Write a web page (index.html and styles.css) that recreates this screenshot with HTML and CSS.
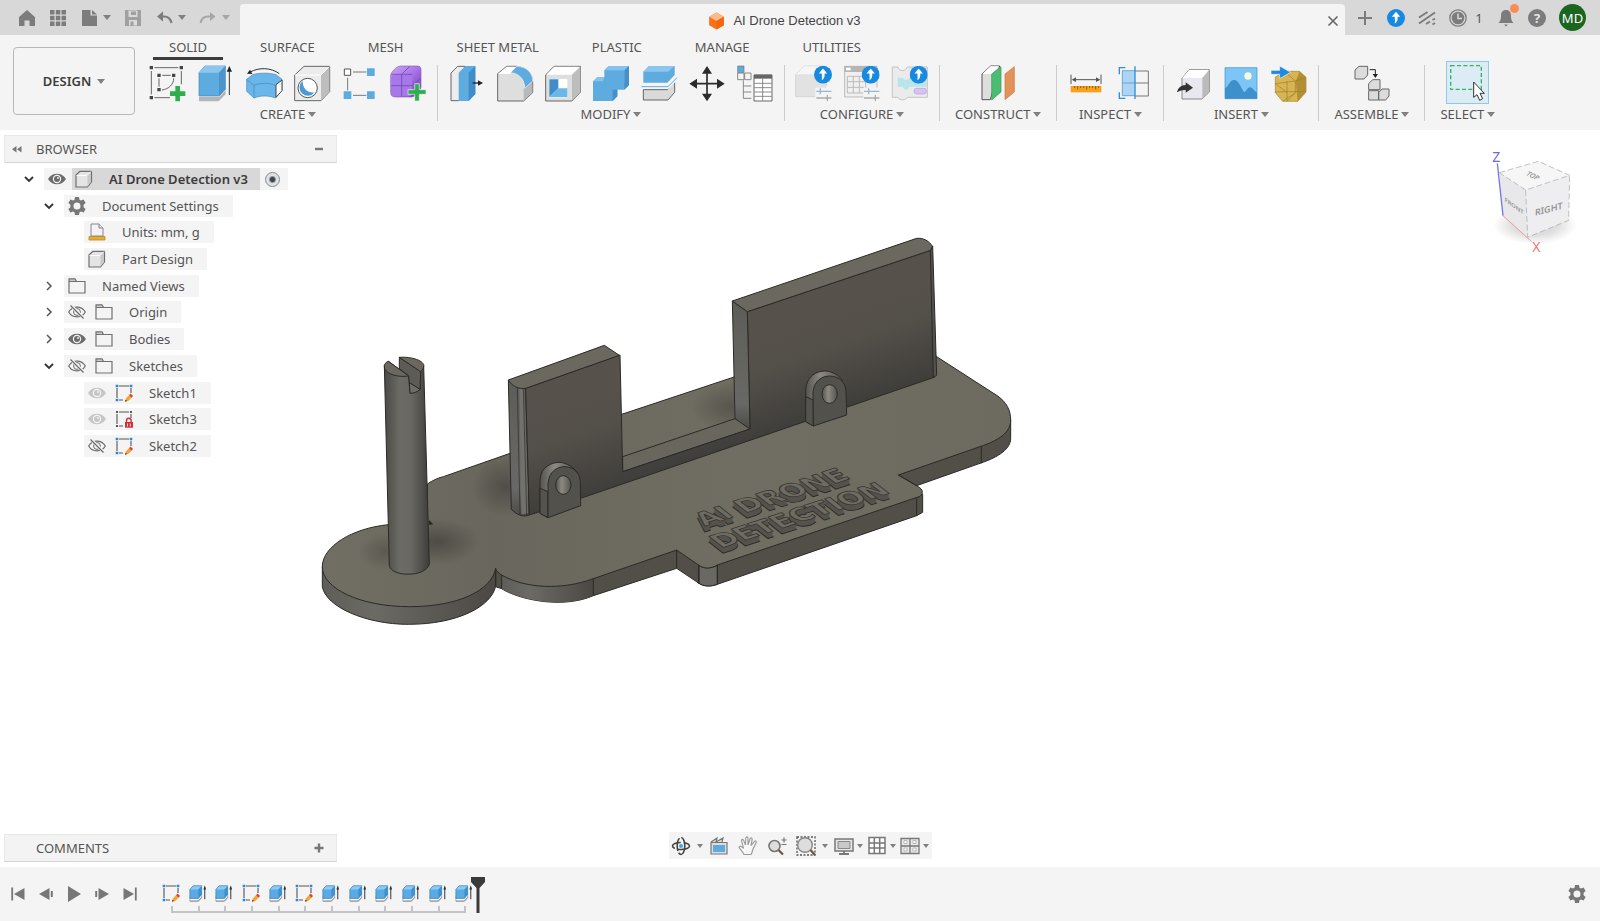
FILE: index.html
```
<!DOCTYPE html>
<html lang="en">
<head>
    <meta charset="UTF-8">
    <title>AI Drone Detection v3</title>
    <link rel="stylesheet" href="styles.css">
</head>
<body>

    <!-- Shared icons -->
    <svg class="sprite" aria-hidden="true">
        <defs>
            <linearGradient id="post" x1="0" x2="1" y1="0" y2="0">
                <stop offset="0" stop-color="#4b4945"/><stop offset=".35" stop-color="#6d6b65"/>
                <stop offset=".6" stop-color="#696761"/><stop offset="1" stop-color="#3f3d3a"/>
            </linearGradient>
            <linearGradient id="disc-side" x1="0" x2="1" y1="0" y2="0">
                <stop offset="0" stop-color="#5e5d58"/><stop offset=".3" stop-color="#6c6a65"/>
                <stop offset="1" stop-color="#4b4843"/>
            </linearGradient>
            <linearGradient id="wall" gradientUnits="userSpaceOnUse" x1="1052" y1="435" x2="1150" y2="719">
                <stop offset="0" stop-color="#56514b"/><stop offset=".4" stop-color="#534f49"/>
                <stop offset="1" stop-color="#403e3b"/>
            </linearGradient>
            <linearGradient id="wall-side" x1="0" x2="0" y1="0" y2="1">
                <stop offset="0" stop-color="#5d5c58"/><stop offset=".8" stop-color="#686966"/>
                <stop offset="1" stop-color="#4b4a47"/>
            </linearGradient>
            <linearGradient id="plate" x1="0" x2="1" y1="0" y2="0">
                <stop offset="0" stop-color="#716e64"/><stop offset=".25" stop-color="#69665d"/>
                <stop offset=".6" stop-color="#706d62"/><stop offset="1" stop-color="#6d6a60"/>
            </linearGradient>
            <linearGradient id="lug" x1="0" x2="1" y1="0" y2="0">
                <stop offset="0" stop-color="#55534e"/><stop offset=".4" stop-color="#8d8982"/>
                <stop offset="1" stop-color="#55534e"/>
            </linearGradient>
            <radialGradient id="shade">
                <stop offset="0" stop-color="#33312e" stop-opacity=".7"/>
                <stop offset="1" stop-color="#33312e" stop-opacity="0"/>
            </radialGradient>
            <radialGradient id="cube-shadow">
                <stop offset=".5" stop-color="#aaa" stop-opacity=".4"/>
                <stop offset="1" stop-color="#aaa" stop-opacity="0"/>
            </radialGradient>
            <linearGradient id="purple" x1="0" x2="1" y1="0" y2="1">
                <stop offset="0" stop-color="#c9a5f0"/><stop offset=".5" stop-color="#a673e6"/>
                <stop offset="1" stop-color="#6d35b0"/>
            </linearGradient>
        </defs>

        <symbol id="eye" viewBox="0 0 18 18">
            <path d="M0 9C4 2 14 2 18 9 14 16 4 16 0 9z" fill="currentColor"/>
            <circle cx="9" cy="9" r="4.2" fill="#f4f4f4"/><circle cx="9" cy="9" r="3" fill="currentColor"/>
            <circle cx="10" cy="8" r=".9" fill="#f4f4f4"/>
        </symbol>
        <symbol id="eye-off" viewBox="0 0 18 18">
            <path d="M.7 9C4.500 2.500 13.500 2.500 17.300 9 13.500 15.500 4.500 15.500.7 9z" fill="none" stroke="currentColor" stroke-width="1.2"/>
            <circle cx="9" cy="9" r="3.400" fill="none" stroke="currentColor"/>
            <path d="M3 2.500l13 13" stroke="#f4f4f4" stroke-width="3"/>
            <path d="M2.500 2.500l13 13" stroke="currentColor" stroke-width="1.300"/>
        </symbol>
        <symbol id="folder" viewBox="0 0 18 18">
            <path d="M1 2h6.500l1.500 2.500H1z" fill="#ccc"/>
            <path d="M1 16V1.800h6l1.500 2.700H17V16zM1 4.500h8" fill="none" stroke="#707070" stroke-width="1.200"/>
        </symbol>
        <symbol id="part" viewBox="0 0 18 18">
            <path d="M1 5l4-3.700h11.500V12l-4 5H1z" fill="#e4e4e4" stroke="#6f6f6f" stroke-width="1.200" stroke-linejoin="round"/>
            <path d="M1.500 5.500H12l4-4" fill="none" stroke="#fff"/><path d="M12.500 5.500l3.500-3.500V12l-3.500 4.500z" fill="#c9c9c9"/>
        </symbol>
        <symbol id="sketch" viewBox="0 0 18 18">
            <path d="M2 4v10M4 2h10M16 4v5M4 16h4" stroke="#555" stroke-width="1.100"/>
            <path d="M.7.7h2.600v2.600H.7zM14.700.7h2.600v2.600h-2.600zM.7 14.700h2.600v2.600H.7z" fill="#2d86d9"/>
            <path d="M10 17.700l1-3.500 3-3 2.500 2.500-3 3z" fill="#f4a62a"/>
            <path d="M14 11.200l1.600-1.600 2.400 2.400-1.500 1.700z" fill="#d5423a"/><path d="M10 17.700l.6-2 1.500 1.400z" fill="#333"/>
        </symbol>
        <symbol id="sketch-locked" viewBox="0 0 18 18">
            <path d="M2 4v10M4 2h10M16 4v4M4 16h4" stroke="#555" stroke-width="1.100"/>
            <path d="M1 1h2v2H1zM15 1h2v2h-2zM1 15h2v2H1z" fill="#555"/>
            <path d="M11.500 12v-1.500a2.300 2.300 0 014.600 0V12" fill="none" stroke="#cf3038" stroke-width="1.400"/>
            <path d="M10 12h8v5.700h-8z" fill="#cf3038"/><path d="M12.500 13.500v3M15.300 13.500v3" stroke="#fff" stroke-width=".8"/>
        </symbol>
        <symbol id="gear" viewBox="0 0 18 18">
            <path fill="#777" fill-rule="evenodd" d="M7 0h4l.5 2.700 1.500.8 2.600-1 2 3.400-2 1.900v2.400l2 1.900-2 3.400-2.600-1-1.500.8L11 18H7l-.5-2.700-1.500-.8-2.600 1-2-3.400 2-1.900V7.800l-2-1.900 2-3.400 2.600 1 1.500-.8zM9 5.500a3.500 3.500 0 100 7 3.500 3.500 0 000-7z"/>
        </symbol>
        <symbol id="extrude" viewBox="0 0 20 20">
            <path d="M1 14l3 0v0h7l3-3v4l-3.500 4H1z" fill="#fff" stroke="#aaa"/>
            <path d="M1 19H10.500l4-4.500" fill="none" stroke="#888"/>
            <path d="M1 6l3.500-4H14v9.500L10.500 16H1z" fill="#5aaae4" stroke="#3380b8" stroke-width=".8"/>
            <path d="M1.500 6l3-3.500H14L10.500 6z" fill="#8cc9f3"/><path d="M10.500 6L14 2.500v9L10.500 15.500z" fill="#3c8fd0"/>
            <path d="M17.500 17V4" stroke="#444" stroke-width="1.200"/><path d="M16 6l1.500-4.500L19 6z" fill="#333"/>
        </symbol>
        <symbol id="upgrade" viewBox="0 0 18 18">
            <circle cx="9" cy="9" r="9" fill="#1689e0"/>
            <path d="M9 2.800l4.200 5h-2.600c.2 3-.1 5.300-3 7 .6-2 .2-4.500.1-7H4.800z" fill="#fff"/>
        </symbol>
        <symbol id="chev-down" viewBox="0 0 10 10"><path d="M1 3l4 4 4-4" fill="none" stroke="#333" stroke-width="1.800"/></symbol>
        <symbol id="chev-right" viewBox="0 0 10 10"><path d="M3 1l4 4-4 4" fill="none" stroke="#555" stroke-width="1.500"/></symbol>
    </svg>

    <!-- Application bar -->
    <header class="appbar">
        <div class="appbar-left">
            <button class="icon-btn" aria-label="Home"><svg viewBox="0 0 18 18"><path d="M9 1l8.500 7.500H17V17h-5.500v-5.500h-5V17H1V8.500H.5z" fill="#7c7c7c"/></svg></button>
            <button class="icon-btn" aria-label="Data panel"><svg viewBox="0 0 18 18"><path d="M1 1h4.500v4.500H1zM6.800 1h4.500v4.500H6.800zM12.500 1H17v4.500h-4.500zM1 6.800h4.500v4.500H1zM6.800 6.800h4.500v4.500H6.800zM12.500 6.800H17v4.500h-4.500zM1 12.500h4.500V17H1zM6.800 12.500h4.500V17H6.800zM12.500 12.500H17V17h-4.500z" fill="#7c7c7c"/></svg></button>
            <button class="icon-btn" aria-label="File"><svg viewBox="0 0 18 18"><path d="M2 1h8.500v5.500H17V17H2z" fill="#7c7c7c"/><path d="M12 1l5 4.500h-5z" fill="#7c7c7c"/></svg><i class="caret"></i></button>
            <button class="icon-btn dim" aria-label="Save"><svg viewBox="0 0 18 18"><path d="M1 1h16v16H1z" fill="#a0a0a0"/><path d="M4.500 1.500h9V8h-9zM5 11h8v5.500H5z" fill="#dadada"/><path d="M7 2.500h5v3.500H7zM6.500 12.500h3V17h-3z" fill="#a0a0a0"/></svg></button>
            <button class="icon-btn" aria-label="Undo"><svg viewBox="0 0 18 18"><path d="M5.500 7.500H9c4 0 6.500 2 7.500 6.500" fill="none" stroke="#7c7c7c" stroke-width="2.200"/><path d="M8 2.500v10L2 7.500z" fill="#7c7c7c"/></svg><i class="caret"></i></button>
            <button class="icon-btn dim" aria-label="Redo"><svg viewBox="0 0 18 18"><path d="M12 7.500H9c-4 0-6.500 2-7.500 6.500" fill="none" stroke="#a6a6a6" stroke-width="1.800"/><path d="M11 3v9l5.500-4.500z" fill="#a6a6a6"/></svg><i class="caret"></i></button>
        </div>
        <div class="doc-tab">
            <svg class="doc-icon" viewBox="0 0 18 18"><path d="M9 0l7.800 4.500v9L9 18l-7.800-4.500v-9z" fill="#f97316"/><path d="M9 0l7.800 4.500L9 9 1.200 4.500z" fill="#fbb98c"/><path d="M9 9l7.800-4.500v9L9 18z" fill="#f4680c"/></svg>
            <span>AI Drone Detection v3</span>
            <button class="doc-close" aria-label="Close"><svg viewBox="0 0 12 12"><path d="M1.500 1.500l9 9M10.500 1.500l-9 9" stroke="#666" stroke-width="1.600"/></svg></button>
        </div>
        <div class="appbar-right">
            <button class="icon-btn" aria-label="New design"><svg viewBox="0 0 18 18"><path d="M9 2v14M2 9h14" stroke="#7c7c7c" stroke-width="2"/></svg></button>
            <button class="icon-btn" aria-label="Updates"><svg><use href="#upgrade"/></svg></button>
            <button class="icon-btn" aria-label="Extensions"><svg viewBox="0 0 18 18"><path d="M1 8.500L9.500 3M1 14.500L17 3.500M8 15l4-2.500M14.500 11l2.500-1.500M14.500 15.500l2.500-1.500" stroke="#7c7c7c" stroke-width="2"/></svg></button>
            <button class="icon-btn" aria-label="Job status"><svg viewBox="0 0 18 18"><circle cx="9" cy="9" r="8.200" fill="none" stroke="#7c7c7c" stroke-width="1.300"/><circle cx="9" cy="9" r="6.300" fill="#7c7c7c"/><path d="M9 4.500V9.500h4" fill="none" stroke="#dadada" stroke-width="1.500"/></svg><span class="job-count">1</span></button>
            <button class="icon-btn bell" aria-label="Notifications"><svg viewBox="0 0 18 18"><path d="M9 1c3.500 0 5 2.500 5 6 0 4 1 5 2.500 7h-15C3 12 4 11 4 7c0-3.500 1.500-6 5-6zM7 15.500h4L9 17.500z" fill="#7c7c7c"/></svg><i class="dot"></i></button>
            <button class="icon-btn help" aria-label="Help">?</button>
            <button class="avatar">MD</button>
        </div>
    </header>

    <!-- Ribbon -->
    <div class="ribbon">
        <button class="workspace">DESIGN<i class="caret"></i></button>
        <div class="ribbon-main">
            <nav class="tabs">
                <button class="tab active">SOLID</button>
                <button class="tab">SURFACE</button>
                <button class="tab">MESH</button>
                <button class="tab">SHEET METAL</button>
                <button class="tab">PLASTIC</button>
                <button class="tab">MANAGE</button>
                <button class="tab">UTILITIES</button>
            </nav>
            <div class="groups">
                <section class="group">
                    <div class="tools">
                        <button class="tool" aria-label="Create sketch"><svg viewBox="451 188 120 120">
                            <path d="M470 202h72M461 212v70M551 212v40M470 292h47M494 225h25M484 234v25M528 234c0 18-14 32-35 35" fill="none" stroke="#666" stroke-width="3"/>
                            <path d="M456 197h10v10h-10zM546 197h10v10h-10zM456 287h10v10h-10zM479 220h10v10h-10zM523 220h10v10h-10zM479 263h10v10h-10z" fill="#444"/>
                            <path d="M533 257h14v16h16v14h-16v16h-14v-16h-16v-14h16z" fill="#2fae50"/></svg></button>
                        <button class="tool" aria-label="Extrude"><svg viewBox="595 188 120 120">
                            <path d="M604 290h60l20-20v12l-21 21h-59z" fill="#b5b5b5"/>
                            <path d="M604 217l18-20h61v70l-19 20h-60z" fill="#5eabe0" stroke="#3f86bd" stroke-width="2"/><path d="M604 217l18-20h61l-19 20z" fill="#8bc6ef"/><path d="M664 217l19-20v70l-19 20z" fill="#4b95cb"/>
                            <path d="M695 284v-75" stroke="#333" stroke-width="3"/><path d="M687 214l8-17 8 17z" fill="#222"/></svg></button>
                        <button class="tool" aria-label="Revolve"><svg viewBox="736 188 120 120">
                            <path d="M755 215c25-14 62-14 87 5" fill="none" stroke="#333" stroke-width="3"/><path d="M745 220l9-12 7 13z" fill="#222"/>
                            <path d="M744 237l18-14c22-6 48-6 70 0l18 14v34l-20 22c-20-8-45-8-64 0l-22-20z" fill="#6ab6ea" stroke="#3f86bd" stroke-width="2"/>
                            <path d="M744 237l22 18v38M766 255c20-8 45-8 64 0" fill="none" stroke="#3f86bd" stroke-width="2"/><path d="M832 253l18-14v32l-18 20z" fill="#fff" stroke="#444" stroke-width="3"/></svg></button>
                        <button class="tool" aria-label="Hole"><svg viewBox="880 188 120 120">
                            <path d="M888 224l28-26h77v76l-26 27h-79z" fill="#ececec" stroke="#666" stroke-width="3"/><path d="M967 224l25-25v75l-25 26z" fill="#bdbdbd"/><path d="M889 224h78l25-25" fill="none" stroke="#fff" stroke-width="3"/>
                            <circle cx="927" cy="263" r="29" fill="#fff" stroke="#555" stroke-width="3"/><path d="M912 242a25 25 0 1036 34c-18 4-37-10-36-34z" fill="#4a9bd8"/></svg></button>
                        <button class="tool" aria-label="Pattern"><svg viewBox="1019 188 120 120">
                            <path d="M1058 215h40M1042 232v38M1058 285h40" stroke="#777" stroke-width="3"/><path d="M1032 206h19v19h-19z" fill="#fff" stroke="#555" stroke-width="3"/>
                            <path d="M1100 204h23v23h-23zM1030 273h23v23h-23zM1100 273h23v23h-23z" fill="#5eabe0"/></svg></button>
                        <button class="tool" aria-label="Create form"><svg viewBox="1166 188 120 120">
                            <path d="M1174 226c0-10 18-29 30-29h48c10 0 13 4 13 12v50c0 10-18 31-28 31h-48c-10 0-15-4-15-14z" fill="url(#purple)" stroke="#8b62bd" stroke-width="2"/>
                            <rect x="1176" y="224" width="62" height="64" rx="10" fill="#a678ea"/>
                            <path d="M1176 256h62M1207 224v64M1238 256l26-22M1207 222l24-24M1176 222h62" fill="none" stroke="#7745b8" stroke-width="2.500"/>
                            <path d="M1246 250h14v18h20v14h-20v20h-14v-20h-20v-14h20z" fill="#2fae50" stroke="#f4f4f4" stroke-width="2"/></svg></button>
                    </div>
                    <button class="group-label">CREATE<i class="caret"></i></button>
                </section>
                <span class="divider"></span>
                <section class="group">
                    <div class="tools">
                        <button class="tool" aria-label="Press pull"><svg viewBox="55 188 120 120">
                            <path d="M67 218l20-20h22v100l-20 3H67z" fill="#ececec" stroke="#666" stroke-width="3"/><path d="M90 217l20-20h30v84l-20 21H90z" fill="#5eabe0"/><path d="M120 217l20-20v84l-20 21z" fill="#3f8cc9"/>
                            <path d="M132 248h20" stroke="#222" stroke-width="4"/><path d="M148 240l15 8-15 8z" fill="#222"/></svg></button>
                        <button class="tool" aria-label="Fillet"><svg viewBox="200 188 120 120">
                            <path d="M208 220l27-22h30c28 3 48 22 48 46v33l-27 25h-78z" fill="#dedede" stroke="#666" stroke-width="3"/><path d="M209 221l26-22h28l-18 22z" fill="#fff"/><path d="M286 264l26-22v35l-26 24z" fill="#b9b9b9"/>
                            <path d="M247 217l18-19c30 0 48 20 48 44l-24 22c0-28-16-44-42-47z" fill="#5eabe0" stroke="#f4f4f4" stroke-width="2"/></svg></button>
                        <button class="tool" aria-label="Shell"><svg viewBox="344 188 120 120">
                            <path d="M352 224l25-26h79v78l-25 26h-79z" fill="#dedede" stroke="#666" stroke-width="3"/><path d="M354 223l24-24h76l-24 24z" fill="#fff"/><path d="M431 224l25-25v77l-25 25z" fill="#bdbdbd"/>
                            <path d="M362 236h55v55h-55z" fill="#fff"/><path d="M363 237h27v27l-27 26z" fill="#3f8cc9"/><path d="M390 264h27v26h-54z" fill="#6cb7ea"/></svg></button>
                        <button class="tool" aria-label="Combine"><svg viewBox="487 188 120 120">
                            <path d="M493 243l13-12h21v-21l13-13h61v57l-14 14h-21v20l-14 14h-59z" fill="#5eabe0"/><path d="M493 243l13-12h21l-4 12zM527 210l13-13h61l-13 13z" fill="#85c3ee"/><path d="M588 210l13-13v57l-14 14zM552 268h14v20l-14 14z" fill="#4590c8"/></svg></button>
                        <button class="tool" aria-label="Split body"><svg viewBox="630 188 120 120">
                            <path d="M643 214l17-17h77v27l-22 23h-72z" fill="#5eabe0"/><path d="M643 214l17-17h77l-20 17z" fill="#8bc6ef"/>
                            <path d="M643 268h72l22-24v32l-20 23h-74z" fill="#d9d9d9" stroke="#666" stroke-width="3"/><path d="M637 259h80l27-27" fill="none" stroke="#f4f4f4" stroke-width="12"/><path d="M637 259h80l27-27" fill="none" stroke="#5eabe0" stroke-width="3"/></svg></button>
                        <button class="tool" aria-label="Move"><svg viewBox="773 188 120 120">
                            <path d="M833 210v80M795 250h78" stroke="#2b2b2b" stroke-width="5"/><path d="M833 197l15 23h-30zM833 303l15-23h-30zM780 250l23-15v30zM886 250l-23-15v30z" fill="#2b2b2b"/></svg></button>
                        <button class="tool" aria-label="Parameters"><svg viewBox="917 188 120 120">
                            <path d="M925 197h19v20h-19z" fill="#5eabe0" stroke="#777" stroke-width="2"/><path d="M925 218h19v20h-19zM946 218h19v20h-19zM942 240v54h24M942 257h24M942 275h24" fill="none" stroke="#888" stroke-width="3"/>
                            <path d="M974 224h54v78h-54z" fill="#fff" stroke="#666" stroke-width="3"/><path d="M974 223h54v12h-54z" fill="#666"/><path d="M975 249h52M975 262h52M975 275h52M975 288h52M1000 235v66" stroke="#777" stroke-width="2.500"/></svg></button>
                    </div>
                    <button class="group-label">MODIFY<i class="caret"></i></button>
                </section>
                <span class="divider"></span>
                <section class="group">
                    <div class="tools">
                        <button class="tool" aria-label="Configure part"><svg viewBox="48 188 120 120">
                            <path d="M53 222l26-25h66v60l-24 32H53z" fill="#e2e2e2" stroke="#ccc" stroke-width="2"/><path d="M54 222l25-24h50l-18 24z" fill="#f6f6f6"/>
                            <path d="M112 262h52v40h-52z" fill="#f4f4f4"/><path d="M115 273h45M127 264v18" stroke="#8ebad3" stroke-width="4"/><path d="M115 293h45M148 284v18" stroke="#aaa" stroke-width="4"/><use href="#upgrade" x="108" y="196" width="54" height="54"/></svg></button>
                        <button class="tool" aria-label="Configuration table"><svg viewBox="192 188 120 120">
                            <path d="M200 198h97v92h-97z" fill="#f0f0f0" stroke="#bbb" stroke-width="3"/><path d="M199 197h98v18h-98z" fill="#b5b5b5"/><path d="M204 202h14v8h-14z" fill="#fff"/><path d="M208 228h55v50h-55zM208 244h55M208 261h50M226 228v50M244 228v50" fill="none" stroke="#bbb" stroke-width="3"/>
                            <path d="M256 262h52v40h-52z" fill="#f4f4f4"/><path d="M258 273h46M272 264v18" stroke="#8ebad3" stroke-width="4"/><path d="M258 293h46M292 284v18" stroke="#aaa" stroke-width="4"/><use href="#upgrade" x="251" y="196" width="54" height="54"/></svg></button>
                        <button class="tool" aria-label="Configuration rules"><svg viewBox="336 188 120 120">
                            <path d="M343 200h17c2 14 24 14 28 0h60v91h-60c-4 10-24 10-28 0h-17z" fill="#ebebeb" stroke="#c4c4c4" stroke-width="3"/><path d="M359 232h15c4 8 16 8 20 0h52v27h-52c-4 12-16 12-20 0h-15z" fill="#b8e5e9"/>
                            <rect x="408" y="264" width="37" height="17" rx="7" fill="#d5c3f2" stroke="#b89be0" stroke-width="2"/><use href="#upgrade" x="395" y="196" width="54" height="54"/></svg></button>
                    </div>
                    <button class="group-label">CONFIGURE<i class="caret"></i></button>
                </section>
                <span class="divider"></span>
                <section class="group">
                    <div class="tools">
                        <button class="tool" aria-label="Construction plane"><svg viewBox="598 188 120 120">
                            <path d="M610 221l26-24h27l-28 101h-25z" fill="#dedede" stroke="#555" stroke-width="3"/><path d="M611 221l25-23h25l-22 23z" fill="#fff"/><path d="M639 221l28-22v76l-28 24z" fill="#4bbd73" stroke="#359a59" stroke-width="2"/><path d="M679 221l28-22v76l-28 23z" fill="#e3925a" stroke="#c9773e" stroke-width="2"/></svg></button>
                    </div>
                    <button class="group-label">CONSTRUCT<i class="caret"></i></button>
                </section>
                <span class="divider"></span>
                <section class="group">
                    <div class="tools">
                        <button class="tool" aria-label="Measure"><svg viewBox="862 188 120 120">
                            <path d="M877 223v28M967 223v28M884 238h76" stroke="#555" stroke-width="3"/><path d="M879 238l13-7v14zM965 238l-13-7v14z" fill="#555"/><path d="M876 257h92v19h-92z" fill="#f7a21b"/><path d="M888 257v6M897 257v10M906 257v6M915 257v6M924 257v10M933 257v6M942 257v6M951 257v10M960 257v6" stroke="#7b4f0b" stroke-width="2.500"/></svg></button>
                        <button class="tool" aria-label="Section analysis"><svg viewBox="1004 188 120 120">
                            <path d="M1067 212h40v75h-40M1067 248h40" fill="none" stroke="#777" stroke-width="3"/><path d="M1029 211h38v75h-38z" fill="#add5f3"/><path d="M1029 211h38M1029 248h38M1029 286h38M1029 211v75" stroke="#5b9ccc" stroke-width="2.500"/><path d="M1067 198v98M1020 222v-20h18M1020 276v18h18" fill="none" stroke="#2b91dc" stroke-width="4"/></svg></button>
                    </div>
                    <button class="group-label">INSPECT<i class="caret"></i></button>
                </section>
                <span class="divider"></span>
                <section class="group">
                    <div class="tools">
                        <button class="tool" aria-label="Insert derive"><svg viewBox="46 188 120 120">
                            <path d="M73 234l21-26h61v67l-22 21H73z" fill="#e8e8ee" stroke="#777" stroke-width="2.500"/><path d="M74 233l20-24h60l-20 24z" fill="#fff"/><path d="M134 233l20-24v65l-20 21z" fill="#bbb"/>
                            <path d="M84 246l22 16-22 15v-8c-12-1-18 3-26 7 3-13 12-22 26-22z" fill="#333"/></svg></button>
                        <button class="tool" aria-label="Insert canvas"><svg viewBox="187 188 120 120">
                            <path d="M199 202h96v93h-96z" fill="#7cc5f7" stroke="#3e8fcb" stroke-width="2"/><circle cx="268" cy="227" r="11" fill="#fbf9dc"/><path d="M199 264c10-4 14-25 27-25 15 0 20 24 31 37 8-6 10-15 17-15 9 0 12 12 21 16v18h-96z" fill="#3e90cb"/></svg></button>
                        <button class="tool" aria-label="Insert mesh"><svg viewBox="333 188 120 120">
                            <path d="M352 230l30-17h42l20 18v44l-25 28h-45l-22-26z" fill="#d9b552" stroke="#a0832f" stroke-width="2"/><path d="M425 213l19 18v44l-25 28-6-60z" fill="#b38f34"/><path d="M352 250l60-8 32-10M352 275l92-2M382 215l30 27v36l-25 24M352 250l35 26M374 302l38-24M387 243v60" fill="none" stroke="#9c7f2d" stroke-width="2"/>
                            <path d="M339 210h26v-13l33 19-33 19v-13h-26z" fill="#1e8be0" stroke="#f4f4f4" stroke-width="2"/></svg></button>
                    </div>
                    <button class="group-label">INSERT<i class="caret"></i></button>
                </section>
                <span class="divider"></span>
                <section class="group">
                    <div class="tools">
                        <button class="tool" aria-label="New component"><svg viewBox="583 188 120 120">
                            <g fill="#dcdcdc" stroke="#666" stroke-width="3" stroke-linejoin="round"><path d="M592 209l12-11h26v26l-11 12h-27zM633 250l12-12h22v30h-34zM633 271h30v28h-30zM663 277l10-11h21v21l-10 12h-21z"/></g>
                            <path d="M636 208h17v16" fill="none" stroke="#222" stroke-width="3"/><path d="M645 221h16l-8 12z" fill="#222"/></svg></button>
                    </div>
                    <button class="group-label">ASSEMBLE<i class="caret"></i></button>
                </section>
                <span class="divider"></span>
                <section class="group">
                    <div class="tools">
                        <button class="tool selected" aria-label="Select"><svg viewBox="882 190 120 120">
                            <path d="M890 198h92v71h-92z" fill="none" stroke="#35b163" stroke-width="4" stroke-dasharray="12 7"/><path d="M959 247v46l10-8 8 17 9-5-8-16h13z" fill="#fff" stroke="#333" stroke-width="3"/></svg></button>
                    </div>
                    <button class="group-label">SELECT<i class="caret"></i></button>
                </section>
            </div>
        </div>
    </div>

    <!-- Modeling viewport -->
    <main class="viewport">
        <svg class="model" viewBox="0 0 2160 1260" stroke-linejoin="round">
            <!-- base thickness -->
            <g stroke="#2b2a27" stroke-width="3">
                <path d="M37 1040v60c10 60 130 113 258 113 150 0 250-55 262-115v-53z" fill="url(#disc-side)"/>
                <path d="M557 1045v55l18 6c50 32 180 62 275 21l250-82 67 45c15 10 35 10 55 3l598-206 18-10v-53l-18-27 190-67c60-20 92-45 92-75v-55z" fill="#524f49"/>
                <path d="M575 1066c90 46 200 42 275 10v51c-95 41-225 11-275-21z" fill="url(#disc-side)" stroke="none"/>
                <path d="M1167 1036c15 10 35 10 55 0v57c-20 7-40 7-55-3z" fill="#6a6863"/>
            </g>
            <!-- base top -->
            <path d="M37 1040C37 980 125 925 235 914L352 908V792c15-10 30-18 48-22l535-187 340-113 602-62 183 118c30 20 42 45 42 74 0 36-32 60-92 80l-245 85 60 35c14 9 16 18 5 29l-608 206c-20 12-40 12-55 1l-67-46-250 86c-95 35-205 30-277-12-10-8-16-12-16-19-12 65-110 115-258 115-150 0-262-55-262-120z" fill="url(#plate)" stroke="#2b2a27" stroke-width="3"/>
            <ellipse cx="380" cy="965" rx="130" ry="70" fill="url(#shade)" opacity=".75"/>
            <ellipse cx="225" cy="995" rx="80" ry="55" fill="url(#shade)" opacity=".45"/>
            <ellipse cx="585" cy="800" rx="100" ry="90" fill="url(#shade)" opacity=".65"/>
            <ellipse cx="1270" cy="560" rx="130" ry="75" fill="url(#shade)" opacity=".6"/>
            <path d="M557 1045v55M575 1066v40M850 1076v51M2014 680v50M1820 835v52M1100 990v55M1166 1035v56M1222 1035v58M1765 765l55 32" stroke="#2b2a27" stroke-width="3" fill="none"/>
            <path d="M357 900l13 13-13 2z" fill="#2b2a27"/>
            <!-- rail between the walls -->
            <path d="M938 710l340-115 42 32-382 128z" fill="#69665e" stroke="#2b2a27" stroke-width="3"/>
            <!-- left wall -->
            <path d="M595 480l9 388c14 15 35 25 54 17l-11-380z" fill="url(#wall-side)" stroke="#2b2a27" stroke-width="3"/>
            <path d="M628 505h14l12 375-20 3z" fill="#72716c"/>
            <path d="M622 500l8 385M640 505l10 380" stroke="#2b2a27" stroke-width="2"/>
            <path d="M647 505l283-100 8 350 382-128-8-352 553-185 7 382-1060 363-154 50z" fill="url(#wall)" stroke="#2b2a27" stroke-width="3"/>
            <path d="M595 480l288-104 45 30-281 99c-22 4-42-8-52-25z" fill="#6b685f" stroke="#2b2a27" stroke-width="3"/>
            <!-- right wall -->
            <path d="M1267 243l45 32 8 352-45-31z" fill="url(#wall-side)" stroke="#2b2a27" stroke-width="3"/>
            <path d="M1267 243l553-188c20-2 38 8 48 25l-3 10-553 185z" fill="#6b685f" stroke="#2b2a27" stroke-width="3"/>
            <path d="M1861 92l7-14 12 388-10 7z" fill="#55524d" stroke="#2b2a27" stroke-width="3"/>
            <!-- lugs -->
            <g stroke="#2b2a27" stroke-width="3">
                <path d="M690 880V780c2-40 35-53 60-53 20 2 42 15 50 30l-86 136z" fill="url(#lug)"/>
                <path d="M690 805l24 10v78l-24-13z" fill="#55534e"/>
                <path d="M714 893V790c4-35 25-50 52-50 28 2 43 20 45 45l1 72z" fill="#53514c"/>
                <ellipse cx="760" cy="795" rx="23" ry="28" fill="url(#lug)"/>
                <path d="M1487 605V510c2-40 30-57 60-57 20 2 40 12 50 28l-87 137z" fill="url(#lug)"/>
                <path d="M1487 530l23 10v78l-23-13z" fill="#55534e"/>
                <path d="M1510 618l-1-103c4-32 25-47 52-47 28 2 45 20 47 45l2 72z" fill="#53514c"/>
                <ellipse cx="1559" cy="522" rx="23" ry="28" fill="url(#lug)"/>
            </g>
            <!-- post -->
            <path d="M223 437l15 600c5 34 110 36 120-5L341 437l-9 18-2 53-30 12-4-52-61-44z" fill="url(#post)" stroke="#2b2a27" stroke-width="3"/>
            <path d="M268 412l64 43-2 53-32-20-2-20-28-22z" fill="#5d5b56" stroke="#2b2a27" stroke-width="3"/>
            <path d="M298 488l32 20c-8 8-18 12-30 12z" fill="#706d65" stroke="#2b2a27" stroke-width="3"/>
            <path d="M235 424l61 44c-35 5-75-7-73-31 1-6 5-10 12-13z" fill="#6b685f" stroke="#2b2a27" stroke-width="3"/>
            <path d="M268 412c35-3 78 10 73 28-1 6-5 11-9 15z" fill="#6b685f" stroke="#2b2a27" stroke-width="3"/>
            <!-- raised lettering: outlined foot, sides, then the top face -->
            <defs>
                <g id="raised">
                    <text transform="matrix(.95 -.31 .69 .54 1184 919)">AI DRONE</text>
                    <text transform="matrix(.95 -.31 .69 .54 1232 985)">DETECTION</text>
                </g>
            </defs>
            <g class="lettering">
                <use class="foot" href="#raised" y="17"/>
                <g class="sides">
                    <use href="#raised" y="15"/><use href="#raised" y="12"/><use href="#raised" y="9"/><use href="#raised" y="6"/><use href="#raised" y="3"/>
                </g>
                <use class="face-top" href="#raised"/>
            </g>
        </svg>

        <div class="view-top">
            <section class="browser">
                <div class="panel-head">
                    <button class="head-btn" aria-label="Collapse"><svg viewBox="0 0 12 12"><path d="M5.500 3v6.500L1 6.200zM10.500 3v6.500L6 6.200z" fill="#777"/></svg></button>
                    <span>BROWSER</span>
                    <button class="head-btn end" aria-label="Minimize"><svg viewBox="0 0 12 12"><path d="M2 6h8" stroke="#777" stroke-width="2.400"/></svg></button>
                </div>
                <ul class="tree">
                    <li class="root">
                        <svg class="chev"><use href="#chev-down"/></svg>
                        <div class="node"><svg class="eye"><use href="#eye"/></svg>
                            <span class="picked"><svg><use href="#part"/></svg><span class="name">AI Drone Detection v3</span></span>
                            <input type="radio" name="active-component" aria-label="Activate component" checked></div>
                    </li>
                    <li class="l1"><svg class="chev"><use href="#chev-down"/></svg><div class="node"><svg><use href="#gear"/></svg><span class="name">Document Settings</span></div></li>
                    <li class="l2"><div class="node"><svg viewBox="0 0 18 18"><path d="M3 13V1h8l4 4v8z" fill="#f2f2f7" stroke="#888"/><path d="M11 1v4h4" fill="#ddd" stroke="#888"/><path d="M1 13.500h16V17H1z" fill="#e4ae35" stroke="#b98825" stroke-width=".8"/></svg><span class="name">Units: mm, g</span></div></li>
                    <li class="l2"><div class="node"><svg><use href="#part"/></svg><span class="name">Part Design</span></div></li>
                    <li class="l1"><svg class="chev"><use href="#chev-right"/></svg><div class="node"><svg><use href="#folder"/></svg><span class="name">Named Views</span></div></li>
                    <li class="l1"><svg class="chev"><use href="#chev-right"/></svg><div class="node"><svg class="eye"><use href="#eye-off"/></svg><svg><use href="#folder"/></svg><span class="name">Origin</span></div></li>
                    <li class="l1"><svg class="chev"><use href="#chev-right"/></svg><div class="node"><svg class="eye"><use href="#eye"/></svg><svg><use href="#folder"/></svg><span class="name">Bodies</span></div></li>
                    <li class="l1"><svg class="chev"><use href="#chev-down"/></svg><div class="node"><svg class="eye"><use href="#eye-off"/></svg><svg><use href="#folder"/></svg><span class="name">Sketches</span></div></li>
                    <li class="l2"><div class="node"><svg class="eye faded"><use href="#eye"/></svg><svg><use href="#sketch"/></svg><span class="name">Sketch1</span></div></li>
                    <li class="l2"><div class="node"><svg class="eye faded"><use href="#eye"/></svg><svg><use href="#sketch-locked"/></svg><span class="name">Sketch3</span></div></li>
                    <li class="l2"><div class="node"><svg class="eye"><use href="#eye-off"/></svg><svg><use href="#sketch"/></svg><span class="name">Sketch2</span></div></li>
                </ul>
            </section>

            <svg class="viewcube" viewBox="0 0 420 420">
                <ellipse cx="225" cy="285" rx="125" ry="58" fill="url(#cube-shadow)"/>
                <path d="M118 128l117-34 94 42-132 44z" fill="#f6f6f7"/>
                <path d="M118 128l79 52 6 142-75-64z" fill="#e8e8ea"/>
                <path d="M197 180l132-44-3 135-123 51z" fill="#eeeef0"/>
                <path d="M118 128l117-34 94 42-132 44zM197 180l6 142 123-51 3-135" fill="none" stroke="#a5a5a5" stroke-width="2" stroke-dasharray="18 8"/>
                <path d="M112 100l17 157" stroke="#7777ec" stroke-width="4"/><path d="M129 257l86 78" stroke="#ee9a9a" stroke-width="3"/>
                <text class="axis" x="97" y="96" fill="#6b6be6">Z</text>
                <text class="axis" x="217" y="367" fill="#ee7676">X</text>
                <text class="face" transform="translate(225 257) skewY(-14)" font-size="27">RIGHT</text>
                <text class="face" transform="translate(134 214) skewY(35)" font-size="17">FRONT</text>
                <text class="face" transform="translate(196 134) rotate(26) skewX(-20)" font-size="20">TOP</text>
            </svg>
        </div>

        <div class="view-bottom">
            <section class="comments panel-head">
                <span>COMMENTS</span>
                <button class="head-btn end" aria-label="Expand comments"><svg viewBox="0 0 12 12"><path d="M1.500 6h9M6 1.500v9" stroke="#777" stroke-width="2.400"/></svg></button>
            </section>
            <nav class="navbar" aria-label="Navigation">
                <button aria-label="Orbit"><svg viewBox="0 0 20 20"><ellipse cx="10" cy="10" rx="3.800" ry="8.500" fill="none" stroke="#444" stroke-width="1.600" stroke-dasharray="13 2"/><ellipse cx="10" cy="10" rx="8.500" ry="3.500" fill="none" stroke="#444" stroke-width="1.600" stroke-dasharray="13 3"/><circle cx="10" cy="10" r="2" fill="#4ba0dd"/></svg><i class="caret"></i></button>
                <button aria-label="Look at"><svg viewBox="0 0 20 20"><path d="M2 6l6-4-1 4 7-4-1 4" fill="#ddd" stroke="#777" stroke-width="1.200"/><path d="M2 6.500h16V18H2z" fill="#ddd" stroke="#777" stroke-width="1.200"/><path d="M4 9h12v7H4z" fill="#5eabe0"/></svg></button>
                <button aria-label="Pan"><svg viewBox="0 0 20 20"><path d="M6 18.500c-1-3-4-5-5-7.500 1-1.500 3-.5 4.500 1.500L3.500 4.500c0-1.500 1.800-1.500 2.200 0L7.500 9 7.800 2c.2-1.500 2-1.500 2.200 0v7l2.200-6.300c.5-1.300 2.100-.8 2 .5L13 9.700l3.500-4.400c1-1 2.300 0 1.700 1.200L15 13c-.5 2-1 4-2 5.500z" fill="#f7f7f7" stroke="#999" stroke-width="1.100"/></svg></button>
                <button aria-label="Zoom"><svg viewBox="0 0 20 20"><circle cx="7.500" cy="10" r="5.500" fill="#ddd" stroke="#777" stroke-width="1.600"/><path d="M11.500 14l4.500 4.500" stroke="#665843" stroke-width="2.200"/><path d="M14.500 4h5M17 1.500v5M14.500 8.500h5" stroke="#777" stroke-width="1.200"/></svg></button>
                <button aria-label="Fit"><svg viewBox="0 0 20 20"><path d="M1 1h18v18H1z" fill="none" stroke="#555" stroke-width="1.300" stroke-dasharray="2 1.500"/><circle cx="9" cy="9" r="7.300" fill="#ddd" stroke="#888" stroke-width="1.400"/><path d="M14.500 14l4.500 5" stroke="#665843" stroke-width="2.200"/></svg><i class="caret"></i></button>
                <button class="tight" aria-label="Display settings"><svg viewBox="0 0 20 20"><path d="M1 3h18v12H1z" fill="#e8e8e8" stroke="#777" stroke-width="1.500"/><path d="M4 5.500h12v7H4z" fill="#c9c9c9" stroke="#888"/><path d="M10 15v3M5 18h10" stroke="#777" stroke-width="1.800"/></svg><i class="caret"></i></button>
                <button class="tight" aria-label="Grid and snaps"><svg viewBox="0 0 20 20"><path d="M2 1.500h16v16H2zM2 7h16M2 12h16M7.300 1.500v16M12.700 1.500v16" fill="#fff" stroke="#777" stroke-width="1.500"/></svg><i class="caret"></i></button>
                <button class="tight" aria-label="Viewports"><svg viewBox="0 0 20 20"><path d="M1 2.500h18v15H1zM1 10h18M10 2.500v15" fill="#e8e8e8" stroke="#777" stroke-width="1.300"/><path d="M4 4.500h3v3H4zM13 4.500h3v3h-3zM4 12h3v3H4zM13 12h3v3h-3z" fill="#fff" stroke="#aaa" stroke-width=".8"/></svg><i class="caret"></i></button>
            </nav>
        </div>
    </main>

    <!-- Timeline -->
    <footer class="timeline">
        <div class="player">
            <button aria-label="Go to start"><svg viewBox="0 0 14 14"><path d="M1.200.5v13" stroke="#777" stroke-width="1.800"/><path d="M13.500 1v12L3 7z" fill="#777"/></svg></button>
            <button aria-label="Step back"><svg viewBox="0 0 14 14"><path d="M10.500 1v12L0 7z" fill="#777"/><path d="M12.800 4v6" stroke="#777" stroke-width="2"/></svg></button>
            <button aria-label="Play"><svg viewBox="0 0 14 14"><path d="M1-1v16l13-8z" fill="#777"/></svg></button>
            <button aria-label="Step forward"><svg viewBox="0 0 14 14"><path d="M3.500 1v12L14 7z" fill="#777"/><path d="M1.200 4v6" stroke="#777" stroke-width="2"/></svg></button>
            <button aria-label="Go to end"><svg viewBox="0 0 14 14"><path d="M12.800.5v13" stroke="#777" stroke-width="1.800"/><path d="M.5 1v12L11 7z" fill="#777"/></svg></button>
        </div>
        <ol class="features">
            <li><svg><use href="#sketch"/></svg></li>
            <li><svg><use href="#extrude"/></svg></li>
            <li><svg><use href="#extrude"/></svg></li>
            <li><svg><use href="#sketch"/></svg></li>
            <li><svg><use href="#extrude"/></svg></li>
            <li><svg><use href="#sketch"/></svg></li>
            <li><svg><use href="#extrude"/></svg></li>
            <li><svg><use href="#extrude"/></svg></li>
            <li><svg><use href="#extrude"/></svg></li>
            <li><svg><use href="#extrude"/></svg></li>
            <li><svg><use href="#extrude"/></svg></li>
            <li><svg><use href="#extrude"/></svg></li>
        </ol>
        <svg class="marker" viewBox="0 0 14 36"><path d="M0 0h14v5L8.500 11v25h-3V11L0 5z" fill="#3a3a3a"/></svg>
        <button class="settings" aria-label="Timeline settings"><svg><use href="#gear"/></svg></button>
    </footer>

</body>
</html>
```
FILE: styles.css
```
* {
    box-sizing: border-box;
}

body {
    margin: 0;
    min-height: 100vh;
    display: flex;
    flex-direction: column;
    background: #fff;
    color: #555;
    font-family: "Noto Sans", sans-serif;
    font-size: 13px;
    line-height: 20px;
}

button {
    padding: 0;
    border: 0;
    background: none;
    color: inherit;
    font: inherit;
    cursor: pointer;
}

svg {
    display: block;
    flex: none;
}

ul, ol {
    margin: 0;
    padding: 0;
    list-style: none;
}

.sprite {
    position: absolute;
    width: 0;
    height: 0;
}

.caret {
    border: 4px solid transparent;
    border-top: 5px solid #808080;
    border-bottom: 0;
}

/* Application bar */
.appbar {
    display: flex;
    height: 35px;
    background: #d8d8d8;
}

.appbar-left, .appbar-right {
    display: flex;
    align-items: center;
    gap: 13px;
}

.appbar-left {
    width: 240px;
    padding-left: 18px;
}

.appbar-right {
    width: 255px;
    padding-left: 11px;
}

.icon-btn {
    display: flex;
    align-items: center;
    position: relative;
}

.icon-btn svg {
    width: 18px;
    height: 18px;
}

.icon-btn .caret {
    margin-left: 5px;
}

.dim .caret {
    border-top-color: #a6a6a6;
}

.doc-tab {
    flex: 1;
    display: flex;
    align-items: center;
    justify-content: center;
    gap: 8px;
    position: relative;
    margin-top: 4px;
    padding: 2px 16px 0 0;
    border-radius: 4px 4px 0 0;
    background: #f4f4f4;
    color: #444;
    font-family: "Liberation Sans", Arial, sans-serif;
}

.doc-icon {
    width: 17px;
    height: 18px;
}

.doc-close {
    position: absolute;
    right: 6px;
}

.doc-close svg {
    width: 12px;
    height: 12px;
}

.job-count {
    width: 17px;
    padding-left: 7px;
}

.dot {
    position: absolute;
    top: -5px;
    right: -4px;
    width: 9px;
    height: 9px;
    border-radius: 50%;
    background: #f98d55;
}

.help {
    justify-content: center;
    width: 18px;
    height: 18px;
    border-radius: 50%;
    background: #7c7c7c;
    color: #e6e6e6;
    font-weight: bold;
}

.avatar {
    width: 27px;
    height: 27px;
    border-radius: 50%;
    background: #1a661f;
    color: #fff;
}

/* Ribbon */
.ribbon {
    display: flex;
    height: 95px;
    background: #f4f4f4;
}

.workspace {
    display: flex;
    align-items: center;
    justify-content: center;
    gap: 6px;
    width: 122px;
    height: 68px;
    margin: 12px 4px 0 13px;
    border: 1px solid #b8b8b8;
    border-radius: 4px;
    color: #3c3c3c;
    font-weight: 600;
}

.tabs {
    display: flex;
    gap: 21px;
    height: 26px;
    padding-left: 14px;
}

.tab {
    height: 25px;
    padding: 2px 16px 0;
    border-bottom: 3px solid transparent;
}

.tab.active {
    border-bottom-color: #3c3c3c;
}

.groups {
    display: flex;
    align-items: center;
}

.group {
    padding: 0 5px;
}

.tools {
    display: flex;
    justify-content: center;
}

.tool {
    display: flex;
    align-items: center;
    justify-content: center;
    width: 48px;
    height: 43px;
}

.tool svg {
    width: 40px;
    height: 40px;
}

.tool.selected {
    width: 43px;
    border: 1px solid #8ccbe6;
    background: #dcecf4;
}

.group-label {
    display: flex;
    align-items: center;
    gap: 3px;
    height: 20px;
    margin: 0 auto;
    padding: 0 10px;
}

.divider {
    width: 1px;
    height: 56px;
    background: #ccc;
}

/* Viewport */
.viewport {
    flex: 1;
    display: flex;
    flex-direction: column;
    justify-content: space-between;
    position: relative;
}

.model {
    position: absolute;
    left: 310px;
    top: 90px;
    width: 720px;
    height: 420px;
}

.lettering {
    font-family: "DejaVu Sans", sans-serif;
    font-size: 85px;
    font-weight: bold;
}

.foot {
    fill: #4b4843;
    stroke: #2f2d2a;
    stroke-width: 4px;
}

.sides {
    fill: #55524c;
}

.face-top {
    fill: #6e6b62;
    stroke: #35332f;
    stroke-width: 3px;
}

.view-top {
    display: flex;
    justify-content: space-between;
    position: relative;
}

.browser {
    width: 333px;
    margin: 5px 0 0 4px;
}

.panel-head {
    display: flex;
    align-items: center;
    height: 28px;
    padding: 0 11px 0 6px;
    border: 1px solid #e8e8e8;
    border-bottom-color: #d4d4d4;
    background: #f3f3f3;
}

.head-btn {
    margin-right: 13px;
}

.head-btn.end {
    margin: 0 0 0 auto;
}

.head-btn svg {
    width: 12px;
    height: 12px;
}

.tree {
    display: flex;
    flex-direction: column;
    justify-content: space-between;
    height: 289px;
    margin-top: 5px;
}

.tree li {
    display: flex;
    align-items: center;
    height: 22px;
    padding-left: 20px;
}

.tree .l1 {
    padding-left: 40px;
}

.tree .l2 {
    padding-left: 80px;
}

.chev {
    width: 10px;
    height: 10px;
    margin-right: 10px;
}

.node {
    display: flex;
    align-items: center;
    height: 22px;
    padding: 0 14px 0 4px;
    background: #f4f4f4;
}

.node svg {
    width: 18px;
    height: 18px;
}

.eye {
    margin-right: 9px;
    color: #6c6c6c;
}

.eye.faded {
    color: #c6c6c6;
}

.name {
    margin-left: 16px;
}

.root .eye {
    margin-right: 6px;
}

.root .node {
    padding-right: 8px;
}

.picked {
    display: flex;
    align-items: center;
    height: 22px;
    padding: 0 12px 0 3px;
    background: #d8d8d8;
    color: #3c3c3c;
    font-weight: 600;
}

.node input {
    appearance: none;
    width: 15px;
    height: 15px;
    margin: 0 0 0 5px;
    border: 1px solid #888;
    border-radius: 50%;
    background: radial-gradient(circle, #444 2px, #dde2e8 4px);
}

.viewcube {
    width: 140px;
    height: 140px;
}

.axis {
    font-size: 42px;
}

.face {
    fill: #929292;
    font-weight: 600;
}

.view-bottom {
    display: grid;
    grid-template-columns: 1fr auto 1fr;
    align-items: center;
    position: relative;
    padding-bottom: 4px;
}

.comments {
    width: 333px;
    margin-left: 4px;
    padding-left: 31px;
}

.navbar {
    display: flex;
    align-items: center;
    gap: 9px;
    height: 27px;
    padding: 0 8px 0 2px;
    margin-bottom: 4px;
    background: #f4f4f4;
}

.navbar button {
    display: flex;
    align-items: center;
    gap: 6px;
}

.navbar svg {
    width: 20px;
    height: 20px;
}

.navbar .caret {
    margin-right: -3px;
    border-width: 4px 3px 0;
}

.navbar .tight {
    gap: 3px;
    margin-right: -2px;
}

/* Timeline */
.timeline {
    display: flex;
    align-items: center;
    position: relative;
    height: 54px;
    padding: 0 14px 0 11px;
    background: #f4f4f4;
}

.player {
    display: flex;
    gap: 14px;
    width: 147px;
}

.player svg {
    width: 14px;
    height: 14px;
    overflow: visible;
}

.features {
    display: flex;
    position: relative;
    width: 320px;
    height: 38px;
}

.features li {
    flex: 1;
    position: relative;
}

.features svg {
    width: 18px;
    height: 18px;
    margin: 9px auto 0 4px;
}

.features li::after {
    content: "";
    position: absolute;
    left: 13px;
    bottom: 0;
    width: 2px;
    height: 7px;
    background: #c4c4c4;
}

.features::after {
    content: "";
    position: absolute;
    left: 13px;
    right: 12px;
    bottom: 0;
    height: 2px;
    background: #c4c4c4;
}

.marker {
    position: absolute;
    left: 471px;
    top: 10px;
    width: 14px;
    height: 36px;
}

.settings {
    margin-left: auto;
}

.settings svg {
    width: 18px;
    height: 18px;
}
```
